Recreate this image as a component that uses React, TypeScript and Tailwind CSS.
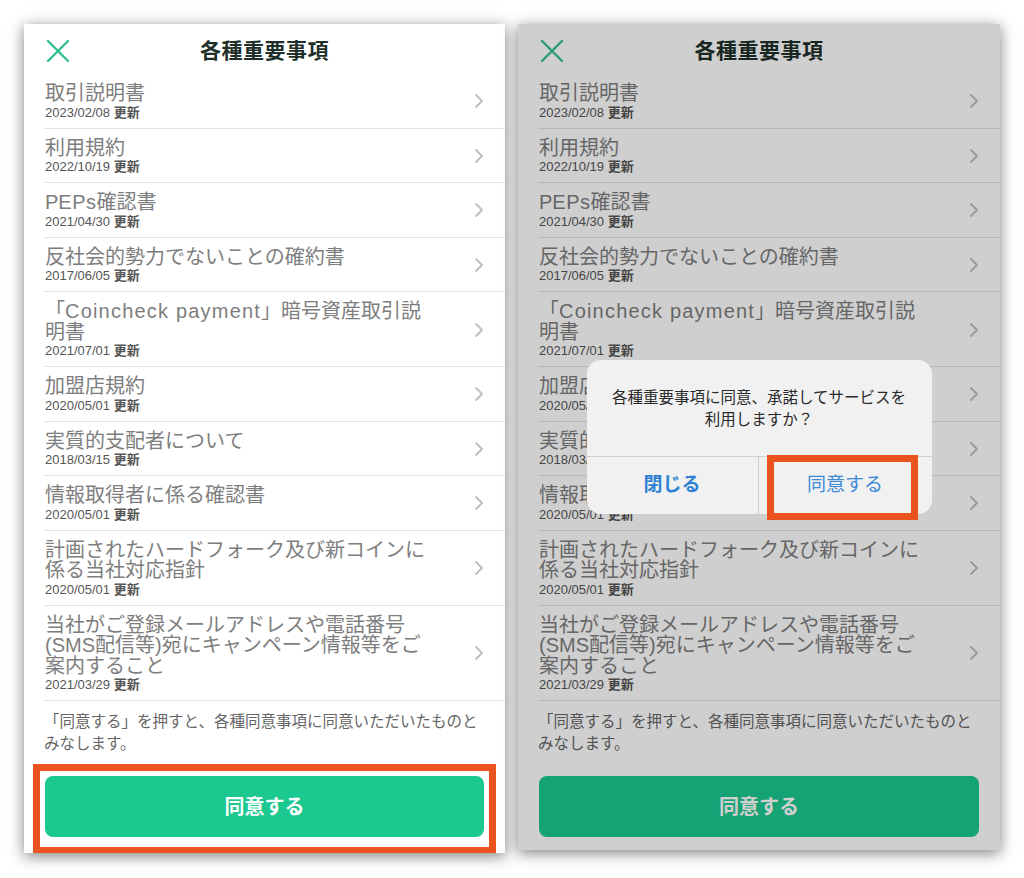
import React from "react";

type Doc = { lines: React.ReactNode[]; date: string };

const docs: Doc[] = [
  { lines: ["取引説明書"], date: "2023/02/08" },
  { lines: ["利用規約"], date: "2022/10/19" },
  { lines: [<>P<span className="tracking-[0.5px]">EPs</span>確認書</>], date: "2021/04/30" },
  { lines: ["反社会的勢力でないことの確約書"], date: "2017/06/05" },
  {
    lines: [
      <>
        「<span className="tracking-[1.2px]">Coincheck payment</span>」暗号資産取引説
      </>,
      "明書",
    ],
    date: "2021/07/01",
  },
  { lines: ["加盟店規約"], date: "2020/05/01" },
  { lines: ["実質的支配者について"], date: "2018/03/15" },
  { lines: ["情報取得者に係る確認書"], date: "2020/05/01" },
  { lines: ["計画されたハードフォーク及び新コインに", "係る当社対応指針"], date: "2020/05/01" },
  {
    lines: ["当社がご登録メールアドレスや電話番号", "(SMS配信等)宛にキャンペーン情報等をご", "案内すること"],
    date: "2021/03/29",
  },
];

const CloseIcon = () => (
  <svg width="24" height="24" viewBox="0 0 24 24" fill="none">
    <path d="M2 2L22 22M22 2L2 22" stroke="#33c08e" strokeWidth="2.4" strokeLinecap="round" />
  </svg>
);

const Chevron = () => (
  <svg width="10" height="16" viewBox="0 0 10 16" fill="none">
    <path d="M2 2L8 8L2 14" stroke="#bdbdbd" strokeWidth="1.8" strokeLinecap="round" strokeLinejoin="round" />
  </svg>
);

const Row = ({ doc }: { doc: Doc }) => (
  <div className="flex items-center border-b border-[#e2e2e2] pt-[9px] pb-[8px] pl-[1px] pr-[21px]">
    <div className="flex-1">
      <div className="text-[20px] leading-[20.5px] text-[#7e7e7e]">
        {doc.lines.map((l, i) => (
          <div key={i} className="whitespace-nowrap">
            {l}
          </div>
        ))}
      </div>
      <div className="mt-[2px] text-[13px] leading-[14px] text-[#565656]">
        {doc.date} <span className="font-bold">更新</span>
      </div>
    </div>
    <Chevron />
  </div>
);

const Phone = ({ dimmed }: { dimmed?: boolean }) => (
  <div
    className={
      "relative flex flex-col bg-white shadow-[0_3px_14px_rgba(0,0,0,0.5)] " +
      (dimmed ? "w-[482px] h-[826px]" : "w-[481px] h-[829px]")
    }
  >
    <div className="grid grid-cols-[1fr_auto_1fr] items-center h-[50px] pt-[3px] px-[22px]">
      <div className="flex">
        <CloseIcon />
      </div>
      <div className="text-[21px] font-bold text-[#1d2f28] tracking-[0.5px]">各種重要事項</div>
      <div />
    </div>
    <div className="ml-[20px]">
      {docs.map((d, i) => (
        <Row key={i} doc={d} />
      ))}
      <div className="pt-[10px] pr-[20px] text-[15.5px] leading-[22px] text-[#666]">
        「同意する」を押すと、各種同意事項に同意いただいたものと
        <br />
        みなします。
      </div>
    </div>
    <div className="mt-[21px] mx-[21px] h-[61px] rounded-[8px] bg-[#1bc88f] flex items-center justify-center">
      <span className="text-white text-[20px] font-bold">同意する</span>
    </div>

    {!dimmed && (
      <div className="absolute left-[9px] top-[740px] w-[463px] h-[89px] border-[7px] border-b-[6px] border-[#e8531e]" />
    )}

    {dimmed && (
      <div className="absolute inset-0 bg-black/[0.19] flex items-center justify-center">
        <div className="relative w-[345px] h-[154px] rounded-[14px] bg-[#f1f1f1] flex flex-col">
          <div className="h-[97px] flex items-center justify-center border-b border-[#cfcfcf] pt-[2px]">
            <p className="text-center text-[15.5px] leading-[22px] text-[#2a2a2a]">
              各種重要事項に同意、承諾してサービスを
              <br />
              利用しますか？
            </p>
          </div>
          <div className="flex flex-1">
            <div className="w-[172px] border-r border-[#cfcfcf] flex items-center justify-center">
              <span className="text-[19px] font-bold text-[#2f82d3]">閉じる</span>
            </div>
            <div className="flex-1 flex items-center justify-center">
              <span className="text-[19px] text-[#3a8ad6]">同意する</span>
            </div>
          </div>
          <div className="absolute left-[180px] top-[95px] w-[151px] h-[65px] border-[7px] border-[#e8531e]" />
        </div>
      </div>
    )}
  </div>
);

export default function App() {
  return (
    <div className="w-[1024px] h-[878px] bg-white flex items-start gap-[13px] pl-[24px] pt-[24px] font-['Liberation_Sans','Noto_Sans_CJK_JP',sans-serif]">
      <Phone />
      <Phone dimmed />
    </div>
  );
}
